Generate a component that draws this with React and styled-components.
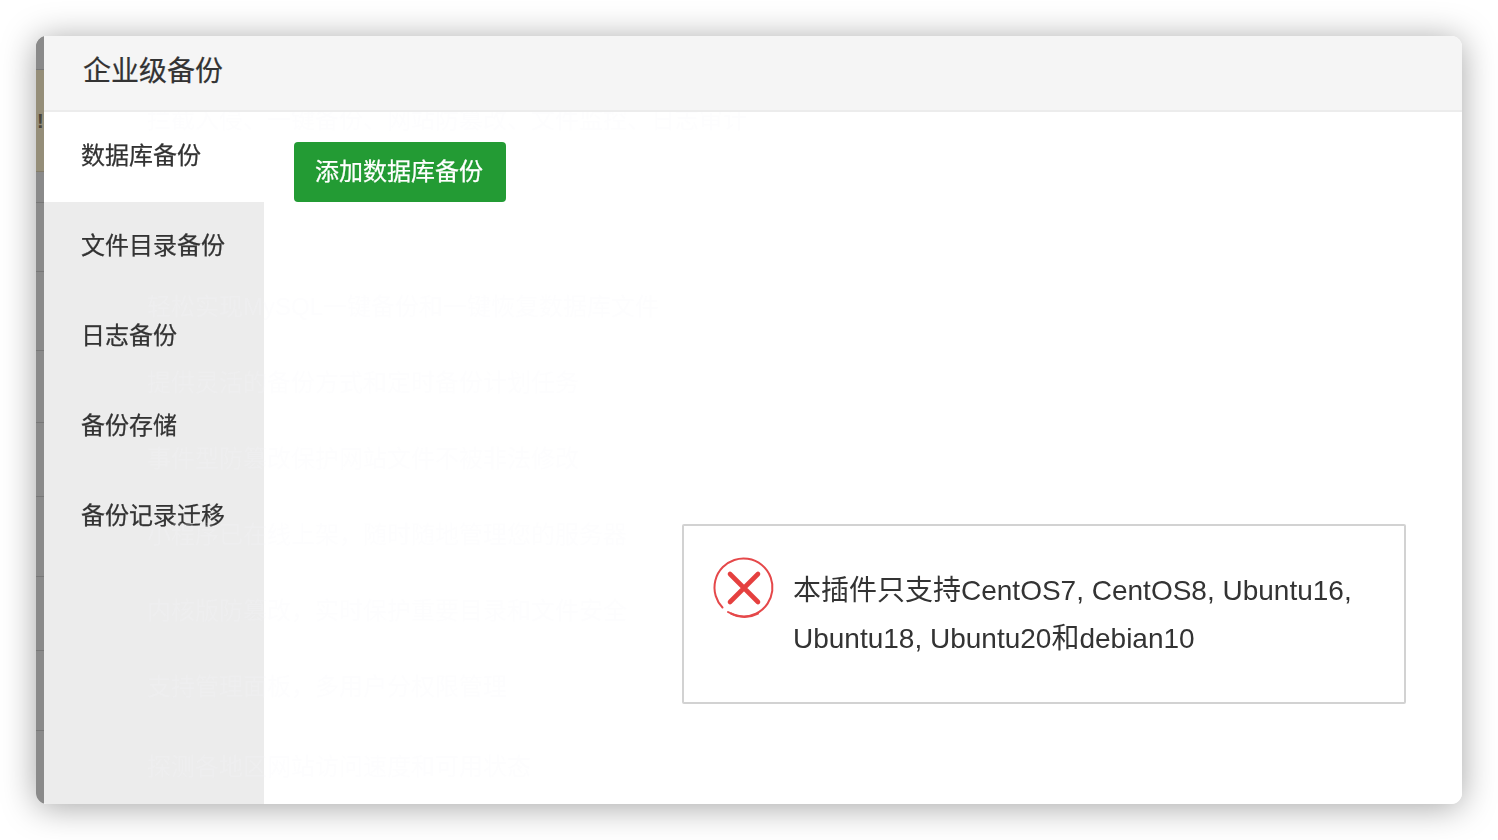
import styled, { createGlobalStyle } from "styled-components";

const GlobalStyle = createGlobalStyle`
  html, body {
    margin: 0;
    height: 100%;
    background: #fff;
    overflow: hidden;
  }
  body {
    font-family: "Liberation Sans", "Noto Sans CJK SC", sans-serif;
    color: #333;
  }
`;

const Page = styled.div`
  height: 840px;
  padding: 36px;
  box-sizing: border-box;
`;

const Window = styled.div`
  height: 768px;
  display: flex;
  border-radius: 11px;
  overflow: hidden;
  box-shadow: 0 3px 34px rgba(0, 0, 0, 0.36);
  filter: blur(0.45px);
`;

const Strip = styled.div`
  position: relative;
  width: 8px;
  flex: none;
  display: flex;
  flex-direction: column;
  background: #8a8a8a;
  overflow: hidden;
`;

const StripBand = styled.div`
  height: ${(p) => p.$h}px;
  flex: none;
  box-sizing: border-box;
  background: ${(p) => (p.$olive ? "#958e79" : "#8a8a8a")};
  border-bottom: 1px solid ${(p) => (p.$olive ? "#827c6a" : "#777")};
`;

const StripGlyph = styled.span`
  position: absolute;
  left: 1px;
  top: 73px;
  font-size: 20px;
  font-weight: 700;
  line-height: 24px;
  color: #4a4538;
`;

const Main = styled.div`
  flex: 1;
  display: flex;
  flex-direction: column;
  min-width: 0;
`;

const Header = styled.div`
  height: 76px;
  flex: none;
  box-sizing: border-box;
  display: flex;
  align-items: center;
  padding: 0 0 8px 39px;
  background: #f5f5f5;
  border-bottom: 2px solid #ececec;
  font-size: 28px;
  color: #333;
  -webkit-text-stroke: 0.2px #333;
`;

const Body = styled.div`
  position: relative;
  flex: 1;
  display: flex;
  background: #fff;
  overflow: hidden;
`;

const Sidebar = styled.div`
  width: 220px;
  flex: none;
  background: #ececec;
`;

const NavItem = styled.div`
  height: 90px;
  box-sizing: border-box;
  padding: 0 0 8px 37px;
  display: flex;
  align-items: center;
  font-size: 24px;
  color: #333;
  -webkit-text-stroke: 0.25px #333;
  background: ${(p) => (p.$active ? "#fff" : "transparent")};
`;

const Content = styled.div`
  flex: 1;
  padding: 30px;
`;

const AddButton = styled.button`
  width: 212px;
  height: 60px;
  border: 0;
  border-radius: 4px;
  padding: 0 2px 6px 0;
  background: #239b34;
  color: #fff;
  font: inherit;
  font-size: 24px;
  -webkit-text-stroke: 0.25px #fff;
`;

const Ghost = styled.div`
  position: absolute;
  left: 103px;
  top: -6px;
  width: 700px;
  pointer-events: none;
  color: rgba(248, 248, 252, 0.22);
  font-size: 24px;
  line-height: 28px;
  white-space: nowrap;
  display: flex;
  flex-direction: column;
  gap: 48px;
`;

const GhostRow = styled.div`
  margin-top: ${(p) => p.$top || 0}px;
`;

const Toast = styled.div`
  position: absolute;
  left: 638px;
  top: 412px;
  width: 724px;
  height: 180px;
  box-sizing: border-box;
  border: 2px solid #d2d2d2;
  border-radius: 2px;
  background: #fff;
  display: flex;
  align-items: flex-start;
  padding: 30px 40px 0 28px;
`;

const ToastIcon = styled.svg`
  width: 64px;
  height: 64px;
  flex: none;
  margin-right: 17px;
`;

const ToastText = styled.div`
  font-size: 28px;
  line-height: 48px;
  padding-top: 11px;
  color: #333;
`;

const bands = [
  { h: 34 },
  { h: 102, olive: true },
  { h: 31 },
  { h: 69 },
  { h: 79 },
  { h: 72 },
  { h: 74 },
  { h: 80 },
  { h: 74 },
  { h: 80 },
];

const navItems = ["数据库备份", "文件目录备份", "日志备份", "备份存储", "备份记录迁移"];

const ghostRows = [
  { text: "拦截入侵、一键备份、网站防篡改、文件监控、日志审计", top: 0 },
  { text: "轻松实现MySQL一键备份和一键恢复数据库文件", top: 111 },
  { text: "提供灵活的备份方式和定时备份计划任务", top: 0 },
  { text: "事件型防篡改保护网站文件不被非法修改", top: 0 },
  { text: "小程序已在线上架，随时随地管理您的服务器", top: 0 },
  { text: "内核版防篡改，实时保护重要目录和文件安全", top: 0 },
  { text: "支持管理面板，多用户分权限管理", top: 0 },
  { text: "探测各地区网站访问速度和可用状态", top: 4 },
];

function App() {
  return (
    <>
      <GlobalStyle />
      <Page>
        <Window>
          <Strip>
            {bands.map((b, i) => (
              <StripBand key={i} $h={b.h} $olive={b.olive} />
            ))}
            <StripGlyph>!</StripGlyph>
          </Strip>
          <Main>
            <Header>企业级备份</Header>
            <Body>
              <Sidebar>
                {navItems.map((item, i) => (
                  <NavItem key={item} $active={i === 0}>
                    {item}
                  </NavItem>
                ))}
              </Sidebar>
              <Content>
                <AddButton>添加数据库备份</AddButton>
              </Content>
              <Ghost>
                {ghostRows.map((row) => (
                  <GhostRow key={row.text} $top={row.top}>
                    {row.text}
                  </GhostRow>
                ))}
              </Ghost>
              <Toast>
                <ToastIcon viewBox="0 0 64 64" fill="none">
                  <path
                    d="M10.5 51.5 A29 29 0 1 1 16 56"
                    stroke="#e5484a"
                    strokeWidth="2"
                    strokeLinecap="round"
                  />
                  <path
                    d="M19 57.5 A29 29 0 0 0 46 57.6"
                    stroke="#e5484a"
                    strokeWidth="2"
                    strokeLinecap="round"
                  />
                  <path
                    d="M18 18 L46 46 M46 18 L18 46"
                    stroke="#e5403f"
                    strokeWidth="4.6"
                    strokeLinecap="round"
                  />
                </ToastIcon>
                <ToastText>
                  本插件只支持CentOS7, CentOS8, Ubuntu16, Ubuntu18, Ubuntu20和debian10
                </ToastText>
              </Toast>
            </Body>
          </Main>
        </Window>
      </Page>
    </>
  );
}

export default App;
